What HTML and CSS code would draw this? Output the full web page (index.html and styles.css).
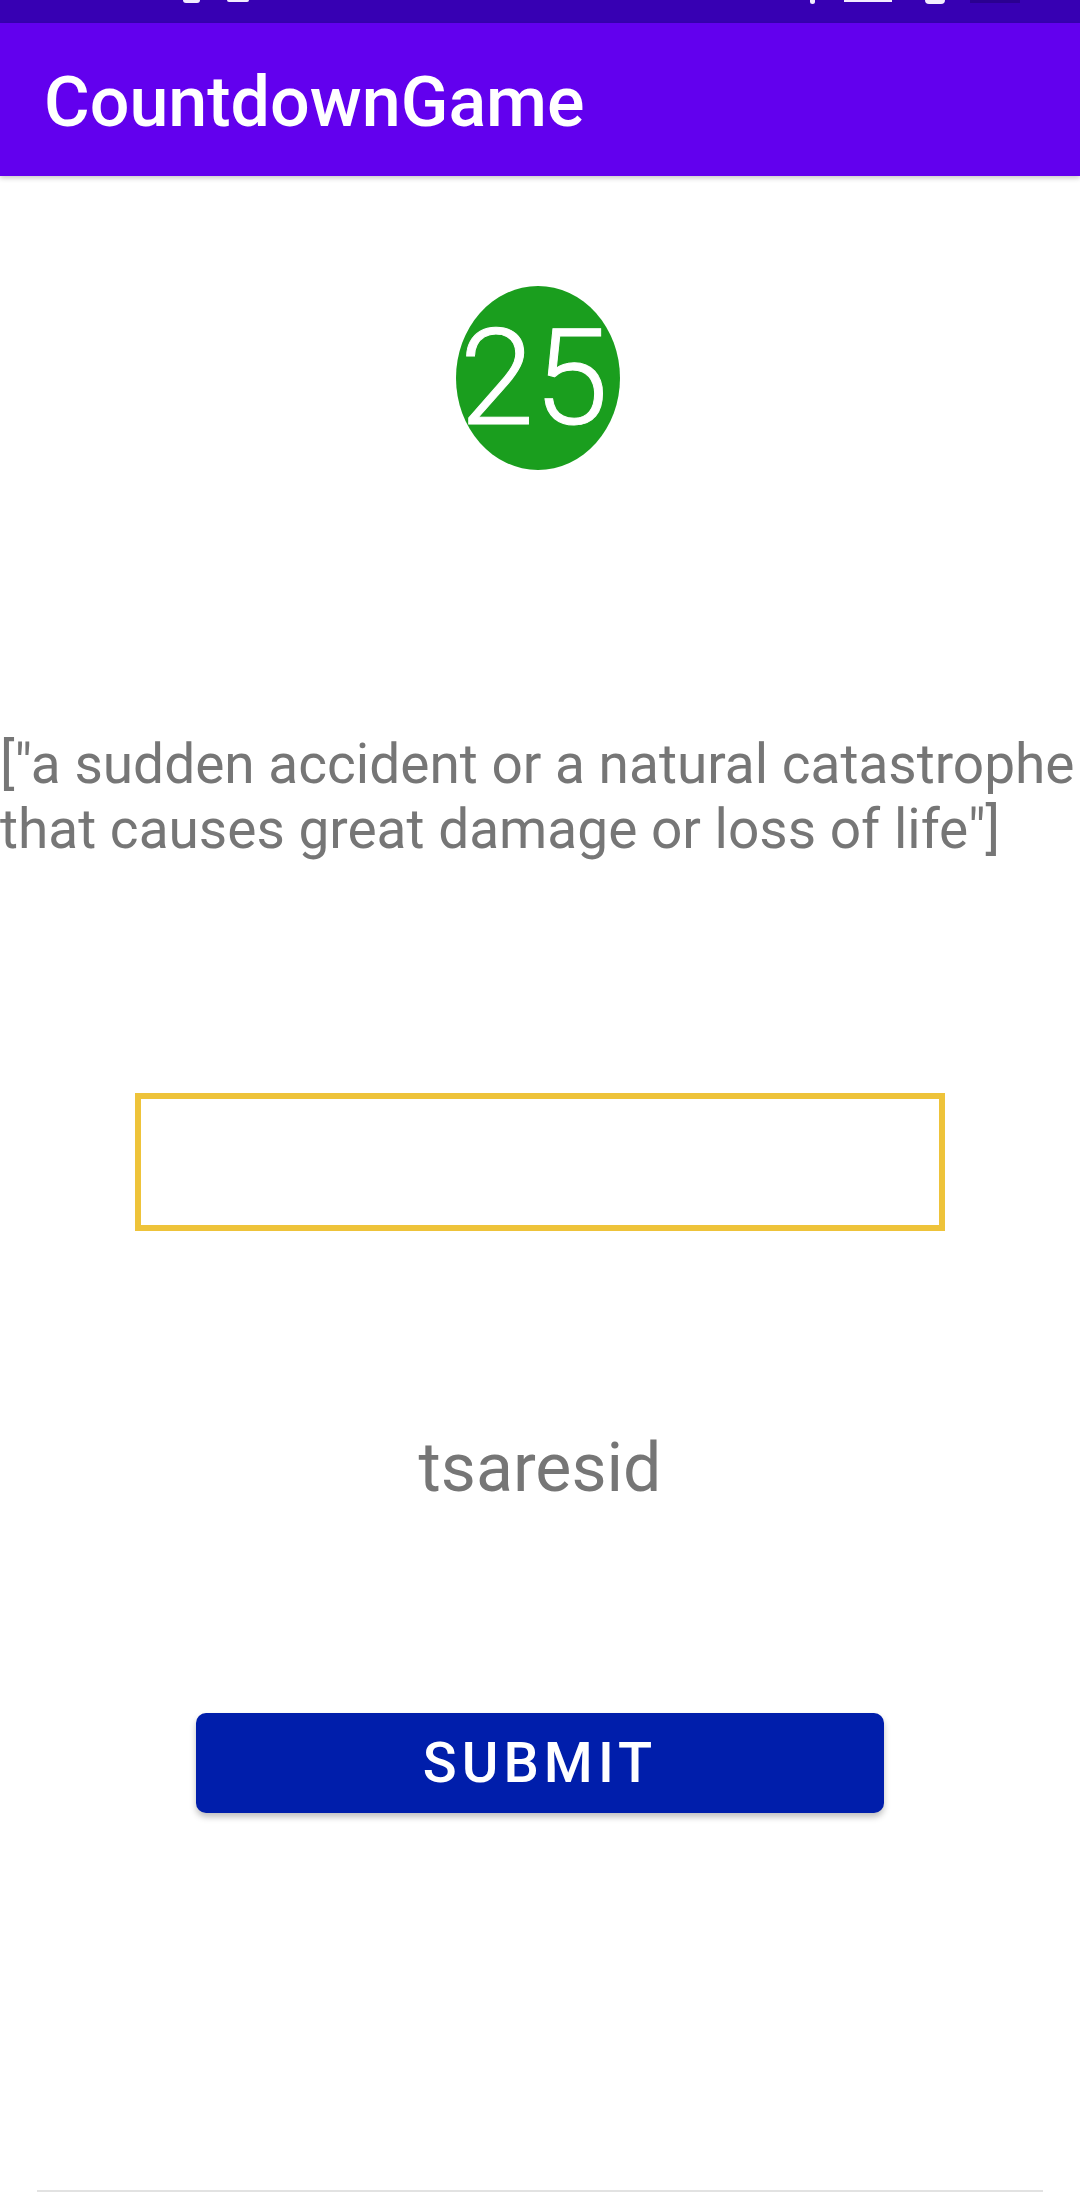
FILE: index.html
```html
<!DOCTYPE html>
<html lang="en">
<head>
<meta charset="utf-8">
<title>CountdownGame</title>
<link rel="stylesheet" href="styles.css">
</head>
<body>
<div class="screen">
  <div class="statusbar">
    <div class="sb-left">
      <span class="sb-blob sb-b1"></span>
      <span class="sb-blob sb-b2"></span>
    </div>
    <div class="sb-right">
      <span class="sb-blob sb-b3"></span>
      <span class="sb-blob sb-b4"></span>
      <span class="sb-blob sb-b5"></span>
      <span class="sb-batt"></span>
    </div>
  </div>
  <header class="appbar">
    <h1 class="title">CountdownGame</h1>
  </header>
  <main class="content">
    <div class="timer"><span class="timer-num">25</span></div>
    <p class="definition">["a sudden accident or a natural catastrophe that causes great damage or loss of life"]</p>
    <div class="answer-box"><input class="answer-input" type="text" aria-label="answer"></div>
    <p class="scrambled">tsaresid</p>
    <button class="submit" type="button">SUBMIT</button>
  </main>
  <div class="bottom-line"></div>
</div>
</body>
</html>
```

FILE: styles.css
```css
* { box-sizing: border-box; }
html, body {
  margin: 0;
  padding: 0;
  background: #ffffff;
}
body {
  width: 1080px;
  height: 2200px;
  overflow: hidden;
  font-family: Roboto, "Noto Sans", "Liberation Sans", sans-serif;
}
.screen {
  width: 1080px;
  height: 2200px;
  display: flex;
  flex-direction: column;
  background: #ffffff;
}
.statusbar {
  height: 23px;
  background: #3700B3;
  display: flex;
  justify-content: space-between;
  flex-shrink: 0;
}
.sb-left, .sb-right {
  display: flex;
  align-items: flex-start;
}
.sb-left { padding-left: 183px; gap: 27px; }
.sb-right { padding-right: 60px; gap: 0; }
.sb-blob {
  display: block;
  background: #f2ecff;
  height: 3px;
  border-radius: 0 0 6px 6px;
}
.sb-b1 { width: 17px; }
.sb-b2 { width: 22px; height: 2px; }
.sb-b3 { width: 5px; height: 4px; margin-right: 29px; }
.sb-b4 { width: 48px; height: 2px; margin-right: 33px; border-radius: 0; }
.sb-b5 { width: 20px; height: 4px; margin-right: 25px; }
.sb-batt {
  display: block;
  width: 50px;
  height: 3px;
  background: #2a0090;
}
.appbar {
  height: 153px;
  background: #6200EE;
  display: flex;
  align-items: center;
  padding-left: 44px;
  flex-shrink: 0;
  position: relative;
  z-index: 1;
  box-shadow: 0 2px 5px rgba(0, 0, 0, 0.22);
}
.title {
  margin: 0;
  margin-top: 4px;
  font-size: 70px;
  font-weight: 500;
  color: #ffffff;
  letter-spacing: 0;
  line-height: 1;
}
.content {
  display: flex;
  flex-direction: column;
  align-items: center;
  flex: 1;
}
.timer {
  margin-top: 110px;
  width: 164px;
  height: 184px;
  border-radius: 50%;
  background: #1A9E1E;
  display: flex;
  align-items: center;
  justify-content: center;
  margin-left: -4px;
}
.timer-num {
  font-size: 134px;
  font-weight: 300;
  -webkit-text-stroke: 1px #ffffff;
  color: #ffffff;
  line-height: 1;
  margin-left: -8px;
  margin-top: 2px;
}
.definition {
  align-self: stretch;
  margin: 262px 0 0 0;
  font-size: 55px;
  line-height: 65px;
  color: #767676;
  text-align: left;
}
.answer-box {
  margin-top: 231px;
  width: 810px;
  height: 138px;
  border: 6px solid #EEC33A;
  background: #ffffff;
}
.answer-input {
  width: 100%;
  height: 100%;
  border: 0;
  outline: none;
  background: transparent;
  font-family: Roboto, "Noto Sans", sans-serif;
  font-size: 50px;
}
.scrambled {
  margin: 197px 0 0 0;
  font-size: 68px;
  line-height: 80px;
  color: #767676;
}
.submit {
  margin-top: 205px;
  width: 688px;
  height: 100px;
  border: 0;
  border-radius: 10px;
  background: #001EAB;
  color: #ffffff;
  font-family: Roboto, "Noto Sans", sans-serif;
  font-size: 56px;
  font-weight: 500;
  letter-spacing: 0.09em;
  padding: 0;
  box-shadow: 0 4px 6px rgba(0, 0, 0, 0.25);
}
.bottom-line {
  height: 2px;
  margin: 0 37px 8px 37px;
  background: #e2e2e2;
  flex-shrink: 0;
}
```
